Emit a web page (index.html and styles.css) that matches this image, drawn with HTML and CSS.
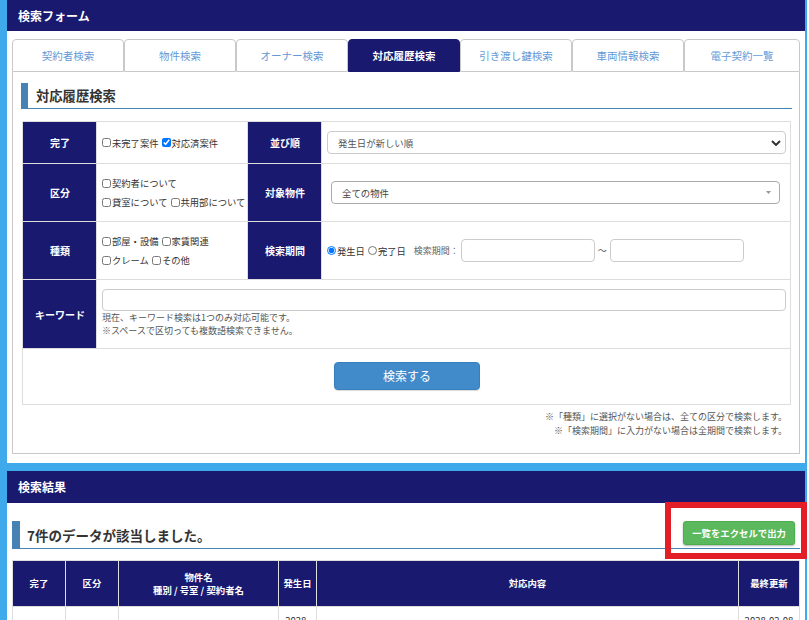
FILE: index.html
```html
<!DOCTYPE html>
<html lang="ja">
<head>
<meta charset="utf-8">
<title>検索フォーム</title>
<link rel="stylesheet" href="styles.css">
</head>
<body>
<div class="page">
  <section class="box">
    <h2 class="box-title">検索フォーム</h2>
    <div class="box-body">
      <ul class="tabs">
        <li class="tab">契約者検索</li>
        <li class="tab">物件検索</li>
        <li class="tab">オーナー検索</li>
        <li class="tab active">対応履歴検索</li>
        <li class="tab">引き渡し鍵検索</li>
        <li class="tab">車両情報検索</li>
        <li class="tab tab-last">電子契約一覧</li>
      </ul>
      <div class="tab-panel">
        <h3 class="heading">対応履歴検索</h3>
        <table class="form-table">
          <colgroup>
            <col class="col-label">
            <col class="col-value">
            <col class="col-label">
            <col>
          </colgroup>
          <tr class="row-1">
            <th>完了</th>
            <td>
              <div class="line">
                <label class="chk"><input type="checkbox">未完了案件</label>
                <label class="chk"><input type="checkbox" checked>対応済案件</label>
              </div>
            </td>
            <th>並び順</th>
            <td class="cell-r">
              <div class="select select-order">
                <span>発生日が新しい順</span>
                <svg class="chev" width="10" height="6" viewBox="0 0 10 6"><path d="M1 1 L5 5 L9 1" fill="none" stroke="#333" stroke-width="2"/></svg>
              </div>
            </td>
          </tr>
          <tr class="row-2">
            <th>区分</th>
            <td>
              <div class="line"><label class="chk"><input type="checkbox">契約者について</label></div>
              <div class="line">
                <label class="chk"><input type="checkbox">貸室について</label>
                <label class="chk"><input type="checkbox">共用部について</label>
              </div>
            </td>
            <th>対象物件</th>
            <td class="cell-r">
              <div class="select select-prop">
                <span>全ての物件</span>
                <svg class="tri" width="5" height="3" viewBox="0 0 5 3"><path d="M0 0 L5 0 L2.5 3 Z" fill="#999"/></svg>
              </div>
            </td>
          </tr>
          <tr class="row-3">
            <th>種類</th>
            <td>
              <div class="line">
                <label class="chk"><input type="checkbox">部屋・設備</label>
                <label class="chk"><input type="checkbox">家賃関連</label>
              </div>
              <div class="line">
                <label class="chk"><input type="checkbox">クレーム</label>
                <label class="chk"><input type="checkbox">その他</label>
              </div>
            </td>
            <th>検索期間</th>
            <td class="cell-r">
              <div class="period">
                <label class="chk"><input type="radio" name="dt" checked>発生日</label>
                <label class="chk"><input type="radio" name="dt">完了日</label>
                <span class="period-label">検索期間：</span>
                <input class="text-input date" type="text">
                <span class="tilde">～</span>
                <input class="text-input date" type="text">
              </div>
            </td>
          </tr>
          <tr class="row-4">
            <th>キーワード</th>
            <td colspan="3" class="cell-kw">
              <input class="text-input keyword" type="text">
              <p class="kw-note">現在、キーワード検索は1つのみ対応可能です。<br>※スペースで区切っても複数語検索できません。</p>
            </td>
          </tr>
          <tr class="row-5">
            <td colspan="4" class="cell-btn"><button class="btn-search" type="button">検索する</button></td>
          </tr>
        </table>
        <p class="notes">※「種類」に選択がない場合は、全ての区分で検索します。<br>※「検索期間」に入力がない場合は全期間で検索します。</p>
      </div>
    </div>
  </section>

  <section class="box">
    <h2 class="box-title box-title-2">検索結果</h2>
    <div class="box-body box-body-2">
      <div class="result-heading">
        <h3 class="result-title">7件のデータが該当しました。</h3>
        <div class="excel-wrap">
          <button class="btn-excel" type="button">一覧をエクセルで出力</button>
          <span class="highlight"></span>
        </div>
      </div>
      <table class="result-table">
        <colgroup>
          <col class="rc-1">
          <col class="rc-2">
          <col class="rc-3">
          <col class="rc-4">
          <col>
          <col class="rc-6">
        </colgroup>
        <tr>
          <th>完了</th>
          <th>区分</th>
          <th>物件名<br>種別 / 号室 / 契約者名</th>
          <th>発生日</th>
          <th>対応内容</th>
          <th>最終更新</th>
        </tr>
        <tr class="data-row">
          <td></td>
          <td></td>
          <td class="cell-name">TEST</td>
          <td>2028-02-08</td>
          <td></td>
          <td>2028-02-08</td>
        </tr>
      </table>
    </div>
  </section>
</div>
</body>
</html>
```

FILE: styles.css
```css
* {
  box-sizing: border-box;
}

html,
body {
  margin: 0;
  padding: 0;
  background: #fff;
}

body {
  font-family: "Noto Sans CJK JP", "Noto Sans", "Liberation Sans", sans-serif;
  color: #333;
  font-size: 10px;
}

.page {
  width: 807px;
  background: #3eaaeb;
  padding: 0 2px 0 7px;
  display: flex;
  flex-direction: column;
  gap: 8px;
}

.box {
  background: #fff;
}

.box-title {
  margin: 0;
  height: 31px;
  background: #191970;
  color: #fff;
  font-size: 12px;
  font-weight: bold;
  line-height: 31px;
  padding-left: 11px;
}

.box-title-2 {
  height: 32px;
  line-height: 32px;
}

.box-body {
  padding: 8px 5px 9px;
}

/* tabs */
.tabs {
  list-style: none;
  margin: 0;
  padding: 0;
  display: flex;
}

.tab {
  flex: 0 0 112px;
  height: 33px;
  border: 1px solid #c8c8c8;
  border-radius: 4px 4px 0 0;
  display: flex;
  align-items: center;
  justify-content: center;
  font-size: 10.5px;
  color: #6499d6;
  background: #fff;
}

.tab-last {
  flex: 1 1 auto;
}

.tab.active {
  background: #191970;
  border-color: #191970;
  color: #fff;
  font-weight: bold;
}

.tab-panel {
  border: 1px solid #c8c8c8;
  border-top: none;
  padding: 11px 7px 15px 8px;
}

.heading {
  margin: 0;
  height: 26px;
  border-left: 7px solid #4682b4;
  border-bottom: 1px solid #4682b4;
  padding-left: 8px;
  font-size: 13.3px;
  font-weight: bold;
  line-height: 25px;
  color: #333;
}

/* form table */
.form-table {
  margin: 12px 1px 0;
  width: calc(100% - 2px);
  border-collapse: collapse;
  table-layout: fixed;
}

.col-label {
  width: 74px;
}

.col-value {
  width: 151px;
}

.form-table th,
.form-table td {
  border: 1px solid #ddd;
  padding: 0 4px 0 5px;
  vertical-align: middle;
}

.form-table th {
  background: #191970;
  color: #fff;
  font-size: 10px;
  font-weight: bold;
  text-align: center;
  border-color: #ddd;
}

.row-1 {
  height: 42px;
}

.row-2,
.row-3 {
  height: 58px;
}

.row-4 {
  height: 69px;
}

.row-5 {
  height: 56px;
}

.line {
  display: flex;
  align-items: center;
  gap: 3px;
  height: 19px;
}

.chk {
  display: inline-flex;
  align-items: center;
  font-size: 9.3px;
  color: #333;
  white-space: nowrap;
}

.chk input {
  width: 9px;
  height: 9px;
  margin: 0 1px 0 0;
}

.select {
  height: 23px;
  border: 1px solid #ccc;
  border-radius: 4px;
  display: flex;
  align-items: center;
  justify-content: space-between;
  font-size: 9.4px;
  color: #555;
  background: #fff;
}

.select-order {
  padding: 0 4px 0 10px;
}

.select-prop {
  margin: 0 6px 0 4px;
  border-color: #aaa;
  padding: 0 8px 0 10px;
  color: #444;
}

.period {
  display: flex;
  align-items: center;
}

.period .chk + .chk {
  margin-left: 3px;
}

.period-label {
  margin: 0 2px 0 8px;
  font-size: 9px;
  color: #666;
}

.text-input {
  height: 23px;
  border: 1px solid #ccc;
  border-radius: 4px;
  background: #fff;
  padding: 0 6px;
  font: inherit;
}

.date {
  width: 134px;
}

.tilde {
  width: 15px;
  text-align: center;
  font-size: 9px;
  color: #555;
}

.cell-kw {
  vertical-align: top !important;
  padding-top: 9px !important;
}

.keyword {
  display: block;
  width: 100%;
  height: 22px;
}

.kw-note {
  margin: 0;
  font-size: 9px;
  line-height: 13px;
  color: #555;
}

.cell-btn {
  text-align: center;
}

.btn-search {
  width: 146px;
  height: 28px;
  border: 1px solid #3a7fbd;
  border-radius: 4px;
  background: #428bca;
  color: #fff;
  font-family: inherit;
  font-size: 12px;
  box-shadow: 0 1px 1px rgba(0, 0, 0, 0.15);
  margin-top: -2px;
}

.notes {
  margin: 5px 5px 0 0;
  text-align: right;
  font-size: 9px;
  line-height: 14px;
  color: #555;
}

/* results */
.box-body-2 {
  padding: 18px 5px 20px;
}

.result-heading {
  height: 28px;
  border-left: 8px solid #4682b4;
  border-bottom: 1px solid #4682b4;
  padding-left: 7px;
  display: flex;
  justify-content: space-between;
  align-items: flex-start;
}

.result-title {
  margin: 0;
  font-size: 13.5px;
  font-weight: bold;
  line-height: 28px;
  color: #333;
}

.excel-wrap {
  position: relative;
  margin-right: 5px;
}

.btn-excel {
  display: block;
  height: 24px;
  padding: 0 8px;
  border: 1px solid #4cae4c;
  border-radius: 3px;
  background: #5cb85c;
  color: #fff;
  font-family: inherit;
  font-size: 9.4px;
  font-weight: bold;
  box-shadow: 0 1px 2px rgba(0, 0, 0, 0.3);
}

.highlight {
  position: absolute;
  left: -18px;
  top: -19px;
  right: -12px;
  bottom: -14px;
  border: 6px solid #e41e26;
}

.result-table {
  margin-top: 11px;
  width: 100%;
  border-collapse: collapse;
  table-layout: fixed;
}

.rc-1,
.rc-2 {
  width: 53px;
}

.rc-3 {
  width: 160px;
}

.rc-4 {
  width: 38px;
}

.rc-6 {
  width: 61px;
}

.result-table th {
  height: 46px;
  background: #191970;
  color: #fff;
  font-size: 9.4px;
  font-weight: bold;
  line-height: 13px;
  border: 1px solid #ddd;
  text-align: center;
  padding: 0 2px;
}

.result-table td {
  border: 1px solid #ddd;
  vertical-align: top;
  text-align: center;
  padding: 7px 3px;
  font-size: 9.5px;
  line-height: 13px;
  height: 60px;
}

.result-table .cell-name {
  padding-top: 10px;
}
```
